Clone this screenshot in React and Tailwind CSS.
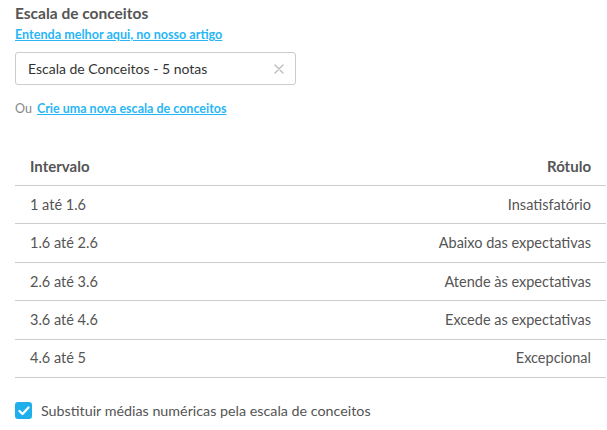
import React from "react";

const rows = [
  ["1 até 1.6", "Insatisfatório"],
  ["1.6 até 2.6", "Abaixo das expectativas"],
  ["2.6 até 3.6", "Atende às expectativas"],
  ["3.6 até 4.6", "Excede as expectativas"],
  ["4.6 até 5", "Excepcional"],
];

export default function App() {
  return (
    <div className="w-[607px] h-[430px] bg-white text-[#555] pl-[15px] pr-px" style={{ fontFamily: "Lato, 'Noto Sans', sans-serif" }}>
      <div className="pt-[3px] text-[15.5px] font-bold text-[#555] leading-[20px]">Escala de conceitos</div>
      <div className="mt-[4px] text-[12.6px] font-bold leading-[16px]">
        <a className="text-[#29b6f6] underline">Entenda melhor aqui, no nosso artigo</a>
      </div>
      <div className="mt-[9px] w-[281px] h-[33px] border border-[#ccc] rounded-[3px] flex items-center justify-between pl-[12px] pr-[11px]">
        <span className="text-[14px] text-[#333]">Escala de Conceitos - 5 notas</span>
        <svg width="10" height="10" viewBox="0 0 10 10">
          <path d="M1 1 L9 9 M9 1 L1 9" stroke="#bbb" strokeWidth="1.4" strokeLinecap="round" />
        </svg>
      </div>
      <div className="mt-[16px] flex items-center gap-[5px] text-[12.5px] leading-[16px]">
        <span className="text-[#888]">Ou</span>
        <a className="text-[#29b6f6] underline font-bold">Crie uma nova escala de conceitos</a>
      </div>
      <div className="mt-[30px]">
        <div className="h-[39px] flex items-center justify-between px-[15px] border-b border-[#ccc] text-[15px] font-bold text-[#555]">
          <span>Intervalo</span>
          <span>Rótulo</span>
        </div>
        {rows.map(([a, b]) => (
          <div key={a} className="h-[38.4px] flex items-center justify-between px-[15px] border-b border-[#ccc] text-[14.5px]">
            <span>{a}</span>
            <span>{b}</span>
          </div>
        ))}
      </div>
      <label className="mt-[22px] flex items-center gap-[9px] text-[14.3px]">
        <span className="w-[17px] h-[17px] rounded-[3px] bg-[#1fb0ec] flex items-center justify-center">
          <svg width="12" height="10" viewBox="0 0 12 10">
            <path d="M1.5 5 L4.5 8 L10.5 1.5" fill="none" stroke="white" strokeWidth="2.2" strokeLinecap="round" strokeLinejoin="round" />
          </svg>
        </span>
        <span>Substituir médias numéricas pela escala de conceitos</span>
      </label>
    </div>
  );
}
